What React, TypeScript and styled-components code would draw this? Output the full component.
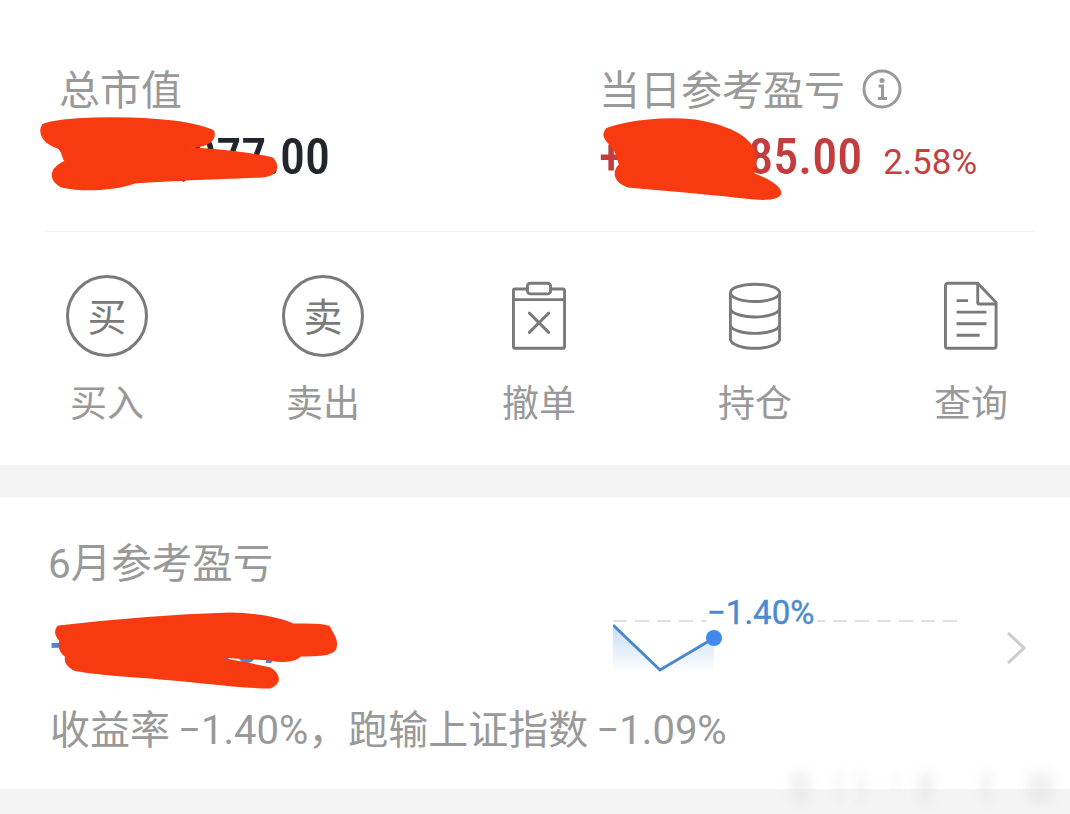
import React from 'react'
import styled, { createGlobalStyle } from 'styled-components'

const FONT = `Roboto, "Noto Sans CJK SC", sans-serif`
const GREY = '#999999'
const ICON_GREY = '#7a7a7a'
const SCRIBBLE = '#f83a10'

const GlobalStyle = createGlobalStyle`
  html, body {
    margin: 0;
    padding: 0;
    background: #fff;
  }
  * {
    box-sizing: border-box;
  }
`

const Page = styled.div`
  position: relative;
  width: 1070px;
  height: 814px;
  overflow: hidden;
  background: #fff;
  font-family: ${FONT};
`

const Summary = styled.section`
  display: flex;
  height: 232px;
  margin: 0 36px 0 45px;
  padding: 65px 0 0 14px;
  border-bottom: 1px solid #eeeeee;
`

const Stat = styled.div`
  display: flex;
  flex: none;
  flex-direction: column;
  width: 540px;
`

const Label = styled.div`
  display: flex;
  align-items: center;
  gap: 17px;
  height: 52px;
  font-size: 41px;
  line-height: 52px;
  color: ${GREY};
`

const ValueRow = styled.div`
  display: flex;
  align-items: baseline;
  gap: 21px;
  margin-top: 10px;
`

const BigValue = styled.span<{ $color: string }>`
  font-size: 50px;
  font-weight: 500;
  font-stretch: 87%;
  line-height: 60px;
  color: ${props => props.$color};
`

const TotalValue = styled(BigValue)`
  margin-left: 21px;
`

const Percent = styled.span`
  font-size: 35px;
  color: #c43f40;
`

const Actions = styled.nav`
  display: grid;
  grid-template-columns: repeat(5, 216px);
  height: 233px;
  margin-left: -1px;
  padding-top: 44px;
`

const ActionItem = styled.div`
  display: flex;
  flex-direction: column;
  align-items: center;
  gap: 24px;
`

const IconSlot = styled.div`
  display: flex;
  align-items: center;
  justify-content: center;
  height: 80px;
`

const CircleIcon = styled.div`
  display: flex;
  align-items: center;
  justify-content: center;
  width: 82px;
  height: 82px;
  padding-bottom: 4px;
  border: 3px solid ${ICON_GREY};
  border-radius: 50%;
  font-size: 39px;
  color: ${ICON_GREY};
`

const ActionLabel = styled.span`
  font-size: 37px;
  line-height: 50px;
  color: ${GREY};
`

const Band = styled.div<{ $height: number }>`
  height: ${props => props.$height}px;
  background: #f4f4f4;
`

const MonthCard = styled.section`
  height: 292px;
  padding-top: 41px;
`

const MonthTitle = styled.div`
  height: 52px;
  padding-left: 48px;
  font-size: 40.500px;
  line-height: 52px;
  color: ${GREY};
`

const MonthRow = styled.div`
  display: flex;
  height: 115px;
  padding: 0 44px 0 48px;
`

const MonthAmount = styled.div`
  flex: none;
  width: 565px;
  margin-top: 26px;
  font-size: 50px;
  font-weight: 500;
  font-stretch: 87%;
  line-height: 60px;
  letter-spacing: 1.400px;
  color: #4f86d4;
`

const Chart = styled.div`
  position: relative;
  flex: none;
  width: 350px;
  height: 115px;
`

const ChartLabel = styled.span`
  position: absolute;
  left: 94px;
  top: 6px;
  padding-right: 3px;
  background: #fff;
  font-size: 33px;
  font-weight: 400;
  font-stretch: 92%;
  line-height: 34px;
  color: #4a8ad0;
  -webkit-text-stroke: 0.4px #4a8ad0;
`

const Chevron = styled.div`
  display: flex;
  align-items: center;
  margin-left: auto;
`

const MonthNote = styled.div`
  height: 52px;
  padding-left: 50px;
  font-size: 40px;
  line-height: 52px;
  color: ${GREY};
  white-space: nowrap;
`

const Scribbles = styled.svg`
  position: absolute;
  left: 0;
  top: 0;
  pointer-events: none;
`

const Watermark = styled.div`
  position: absolute;
  left: 785px;
  top: 772px;
  width: 276px;
  height: 32px;
  background: linear-gradient(
    90deg,
    transparent 0 2%,
    #dddddd 2% 9%,
    transparent 9% 18%,
    #e6e6e6 18% 21%,
    transparent 21% 26%,
    #e2e2e2 26% 29%,
    transparent 29% 39%,
    #e6e6e6 39% 41%,
    transparent 41% 48%,
    #e0e0e0 48% 54%,
    transparent 54% 71%,
    #e2e2e2 71% 75%,
    transparent 75% 88%,
    #dddddd 88% 97%,
    transparent 97% 100%
  );
  opacity: 0.4;
  filter: blur(6px);
`

const InfoGlyph = styled.svg`
  margin-top: -4px;
`

const ClipboardIcon = () => (
  <svg width="54" height="70" viewBox="0 0 56 72" fill="none" stroke={ICON_GREY} strokeWidth="3" strokeLinejoin="round" strokeLinecap="round">
    <path d="M16 8H3a1.500 1.500 0 0 0-1.500 1.500V68a1.500 1.500 0 0 0 1.500 1.500h50a1.500 1.500 0 0 0 1.500-1.500V9.500A1.500 1.500 0 0 0 53 8H40" />
    <rect x="16" y="2" width="24" height="11" rx="3" />
    <path d="M2 19H54" />
    <path d="M18 33L38 53M38 33L18 53" />
  </svg>
)

const DatabaseIcon = () => (
  <svg width="54" height="70" viewBox="0 0 56 72" fill="none" stroke={ICON_GREY} strokeWidth="3">
    <ellipse cx="28" cy="12" rx="25.500" ry="9" />
    <path d="M2.500 12V60C2.500 65 14 69.500 28 69.500S53.500 65 53.500 60V12" />
    <path d="M2.500 28C2.500 33 14 37 28 37S53.500 33 53.500 28" />
    <path d="M2.500 45C2.500 50 14 54 28 54S53.500 50 53.500 45" />
  </svg>
)

const DocumentIcon = () => (
  <svg width="54" height="70" viewBox="0 0 56 72" fill="none" stroke={ICON_GREY} strokeWidth="3" strokeLinejoin="round">
    <path d="M4 2H35L54 22V67a2.500 2.500 0 0 1-2.500 2.500H4A2.500 2.500 0 0 1 1.500 67V4.500A2.500 2.500 0 0 1 4 2Z" />
    <path d="M35 2V22a1.500 1.500 0 0 0 1.500 1.500H54" />
    <path d="M13 20H25M13 32H44M13 44H44M13 56H37" />
  </svg>
)

const InfoIcon = () => (
  <InfoGlyph width="40" height="40" viewBox="0 0 40 40" fill="none" stroke={GREY}>
    <circle cx="20" cy="20" r="18" strokeWidth="3" />
    <circle cx="20" cy="11.500" r="2.500" fill={GREY} stroke="none" />
    <path d="M16.500 17H20.500V29M16 29.500H25" strokeWidth="3" />
  </InfoGlyph>
)

const TrendChart = () => (
  <svg width="350" height="115" viewBox="0 0 350 115" fill="none">
    <defs>
      <linearGradient id="trendFill" x1="0" y1="0" x2="0" y2="1">
        <stop offset="0" stopColor="#c4dcf6" />
        <stop offset="1" stopColor="#ffffff" />
      </linearGradient>
    </defs>
    <path d="M0 35L47 80L101 48V82H0Z" fill="url(#trendFill)" />
    <path d="M0 31H350" stroke="#d6d6d6" strokeWidth="1.500" strokeDasharray="14 8" />
    <path d="M0 35L47 80L101 48" stroke="#4a86cf" strokeWidth="3" />
    <circle cx="101" cy="48" r="8" fill="#4189ee" />
  </svg>
)

const ChevronIcon = () => (
  <svg width="20" height="32" viewBox="0 0 20 32" fill="none" stroke="#cccccc" strokeWidth="3">
    <path d="M2 1L18 16L2 31" />
  </svg>
)

const ACTIONS = [
  { label: '买入', icon: <CircleIcon>买</CircleIcon> },
  { label: '卖出', icon: <CircleIcon>卖</CircleIcon> },
  { label: '撤单', icon: <ClipboardIcon /> },
  { label: '持仓', icon: <DatabaseIcon /> },
  { label: '查询', icon: <DocumentIcon /> },
]

// hand drawn redaction marks over the amounts
const SCRIBBLE_PATHS = [
  'M44 126C60 120 100 119 130 120C165 121 195 125 212 132C214 140 205 145 190 145C178 144 170 146 180 149C210 151 250 154 272 160C278 168 274 174 262 175C220 177 170 178 135 181C115 188 85 190 62 185C50 178 52 168 68 162C62 156 66 150 58 146C46 142 40 134 44 126Z',
  'M608 130C630 122 665 119 695 122C720 126 745 135 752 150C756 160 752 168 752 175C765 180 778 186 779 193C775 199 760 198 735 195C700 191 660 188 628 185C616 180 614 172 622 165C618 158 620 152 612 144C606 138 604 134 608 130Z',
  'M59 628C110 622 170 617 230 615C255 615 280 620 293 626C305 626 320 625 328 628C332 636 336 640 334 648C330 654 315 654 300 654C295 660 285 661 270 658C245 656 215 655 190 655C220 660 250 665 270 670C278 676 279 682 270 686C240 686 200 680 150 676C120 674 90 672 74 668C68 664 66 660 68 656C62 652 60 646 62 640C58 636 56 632 59 628Z',
]

export default function App() {
  return (
    <Page>
      <GlobalStyle />
      <Summary>
        <Stat>
          <Label>总市值</Label>
          <ValueRow>
            <TotalValue $color="#22252b">0000,077.00</TotalValue>
          </ValueRow>
        </Stat>
        <Stat>
          <Label>
            当日参考盈亏
            <InfoIcon />
          </Label>
          <ValueRow>
            <BigValue $color="#c33d3e">+0000085.00</BigValue>
            <Percent>2.58%</Percent>
          </ValueRow>
        </Stat>
      </Summary>
      <Actions>
        {ACTIONS.map(action => (
          <ActionItem key={action.label}>
            <IconSlot>{action.icon}</IconSlot>
            <ActionLabel>{action.label}</ActionLabel>
          </ActionItem>
        ))}
      </Actions>
      <Band $height={32} />
      <MonthCard>
        <MonthTitle>6月参考盈亏</MonthTitle>
        <MonthRow>
          <MonthAmount>−00,000.67</MonthAmount>
          <Chart>
            <TrendChart />
            <ChartLabel>−1.40%</ChartLabel>
          </Chart>
          <Chevron>
            <ChevronIcon />
          </Chevron>
        </MonthRow>
        <MonthNote>收益率{'\u2009'}−1.40%，跑输上证指数{'\u2009'}−1.09%</MonthNote>
      </MonthCard>
      <Band $height={25} />
      <Watermark />
      <Scribbles width="1070" height="814" viewBox="0 0 1070 814">
        {SCRIBBLE_PATHS.map(d => (
          <path key={d} d={d} fill={SCRIBBLE} stroke={SCRIBBLE} strokeWidth="5" strokeLinejoin="round" />
        ))}
      </Scribbles>
    </Page>
  )
}
